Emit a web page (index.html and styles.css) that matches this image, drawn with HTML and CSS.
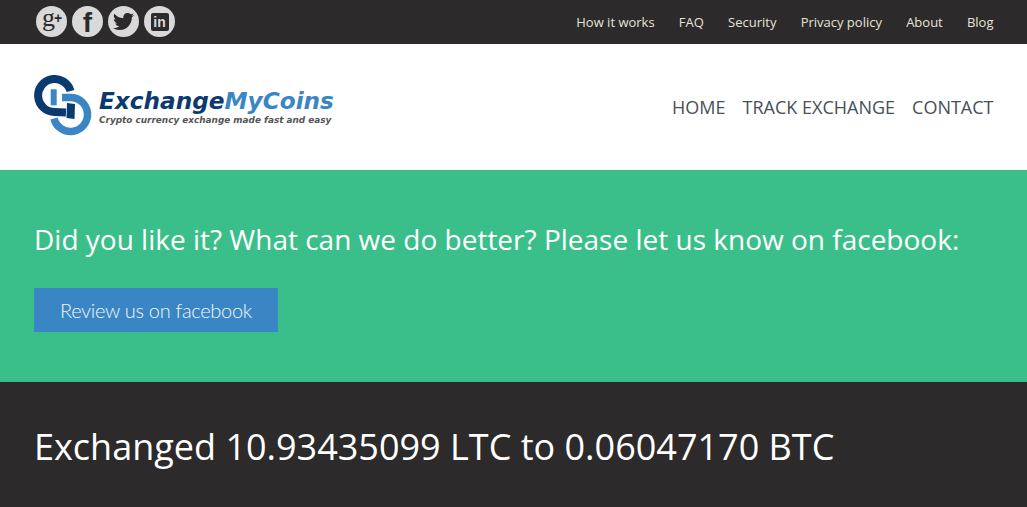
FILE: index.html
```html
<!DOCTYPE html>
<html lang="en">
<head>
<meta charset="utf-8">
<title>ExchangeMyCoins</title>
<link rel="stylesheet" href="styles.css">
</head>
<body>
<div class="topbar">
  <div class="social">
    <a class="soc"><span class="gp">g<span class="plus">+</span></span></a>
    <a class="soc"><span class="fb">f</span></a>
    <a class="soc"><svg viewBox="0 0 24 24" width="23" height="23"><path fill="#2c2a2b" d="M23 5.200c-.8.4-1.700.6-2.600.7.900-.6 1.700-1.400 2-2.500-.9.5-1.900.9-2.900 1.100C18.700 3.500 17.500 3 16.200 3c-2.500 0-4.500 2-4.500 4.500 0 .4 0 .7.100 1C8 8.300 4.700 6.500 2.500 3.800c-.4.700-.6 1.400-.6 2.300 0 1.600.8 3 2 3.800-.7 0-1.400-.2-2-.6v.1c0 2.200 1.600 4 3.600 4.400-.4.100-.8.200-1.200.2-.3 0-.6 0-.9-.1.600 1.800 2.200 3.100 4.200 3.100-1.500 1.200-3.500 1.900-5.600 1.900H1c2 1.300 4.400 2 6.900 2 8.300 0 12.800-6.900 12.800-12.800v-.6c.9-.6 1.700-1.400 2.300-2.300z"/></svg></a>
    <a class="soc"><span class="li">in</span></a>
  </div>
  <nav class="topnav">
    <a>How it works</a><a>FAQ</a><a>Security</a><a>Privacy policy</a><a>About</a><a>Blog</a>
  </nav>
</div>
<header class="header">
  <div class="logo">
    <svg class="logo-mark" viewBox="34 74 58 62" width="58" height="62">
      <path fill="none" stroke="#3a86c5" stroke-width="7.500" d="M62 96.500H70.500A17 17 0 1 1 54 117.500"/>
      <path fill="none" stroke="#0b3a70" stroke-width="8" d="M70.500 90A16.500 16.500 0 1 0 54.500 111L66 111.500"/>
      <polygon fill="#3a86c5" points="50.700,88.300 56.700,88.300 56.700,104.300 50.700,104.300"/>
      <polygon fill="#0b3a70" points="67,102 75,103 74.500,118 66.500,117"/>
    </svg>
    <div class="logo-text">
      <div class="logo-name"><span class="dark">Exchange</span><span class="light">MyCoins</span></div>
      <div class="logo-tag">Crypto currency exchange made fast and easy</div>
    </div>
  </div>
  <nav class="mainnav"><a>HOME</a><a>TRACK EXCHANGE</a><a>CONTACT</a></nav>
</header>
<section class="review">
  <h2 class="review-title">Did you like it? What can we do better? Please let us know on facebook:</h2>
  <a class="btn">Review us on facebook</a>
</section>
<section class="result">
  <h1 class="result-title">Exchanged 10.93435099 LTC to 0.06047170 BTC</h1>
</section>
</body>
</html>
```

FILE: styles.css
```css
* { box-sizing: border-box; }
html, body { margin: 0; padding: 0; }
body {
  background: #2c2a2b;
  font-family: "Open Sans", sans-serif;
  height: 507px;
  overflow: hidden;
}
.topbar {
  height: 44px;
  background: #2c2a2b;
  display: flex;
  justify-content: space-between;
  align-items: center;
  padding: 0 33.500px 0 36px;
}
.social { display: flex; gap: 5px; margin-top: -2px; }
.soc {
  width: 31px;
  height: 31px;
  border-radius: 50%;
  background: #d9d9d9;
  color: #2c2a2b;
  display: flex;
  align-items: center;
  justify-content: center;
  font-weight: 700;
}
.gp { font-family: "Liberation Serif", serif; font-weight: 400; font-size: 26px; line-height: 26px; margin-top: -6px; margin-left: 1px; }
.plus { font-family: "Liberation Sans", sans-serif; font-weight: 700; font-size: 14px; vertical-align: 3px; margin-left: -1px; }
.fb { font-family: "Liberation Sans", sans-serif; font-size: 28px; line-height: 31px; margin-top: 2px; }
.li {
  font-family: "Liberation Sans", sans-serif;
  width: 18px;
  height: 18px;
  margin-top: 1px;
  border-radius: 2px;
  background: #2c2a2b;
  color: #d9d9d9;
  font-size: 14px;
  line-height: 19px;
  text-align: center;
}
.topnav { display: flex; gap: 24.200px; }
.topnav a { color: #e6e3d8; font-size: 13px; line-height: 18px; }
.header {
  height: 126px;
  background: #fff;
  display: flex;
  justify-content: space-between;
  align-items: center;
  padding: 0 33.500px 0 34px;
}
.logo { display: flex; align-items: center; gap: 7px; margin-top: -3px; }
.logo-text { margin-top: 2px; font-family: "DejaVu Sans", sans-serif; font-style: italic; font-weight: 700; }
.logo-name { font-size: 23.200px; line-height: 26px; white-space: nowrap; }
.dark { color: #0b3a70; }
.light { color: #3a86c5; }
.logo-tag { font-size: 8.900px; line-height: 12px; color: #555; white-space: nowrap; }
.mainnav { display: flex; gap: 17px; }
.mainnav a { color: #474f58; font-size: 18px; line-height: 24px; }
.review {
  height: 212px;
  background: #3abf8a;
  padding: 49px 34px 0;
}
.review-title {
  margin: 0 0 29px;
  color: #fff;
  font-weight: 400;
  font-size: 28px;
  line-height: 40px;
  white-space: nowrap;
}
.btn {
  display: block;
  width: 244px;
  height: 44px;
  background: #3a86c5;
  color: #f0f6fa;
  font-family: Lato, sans-serif;
  font-weight: 300;
  font-size: 20px;
  letter-spacing: -0.3px;
  line-height: 44px;
  text-align: center;
}
.result { padding: 40px 34px 0; }
.result-title {
  margin: 0;
  color: #fff;
  font-weight: 400;
  font-size: 36px;
  line-height: 50px;
  white-space: nowrap;
}
```
